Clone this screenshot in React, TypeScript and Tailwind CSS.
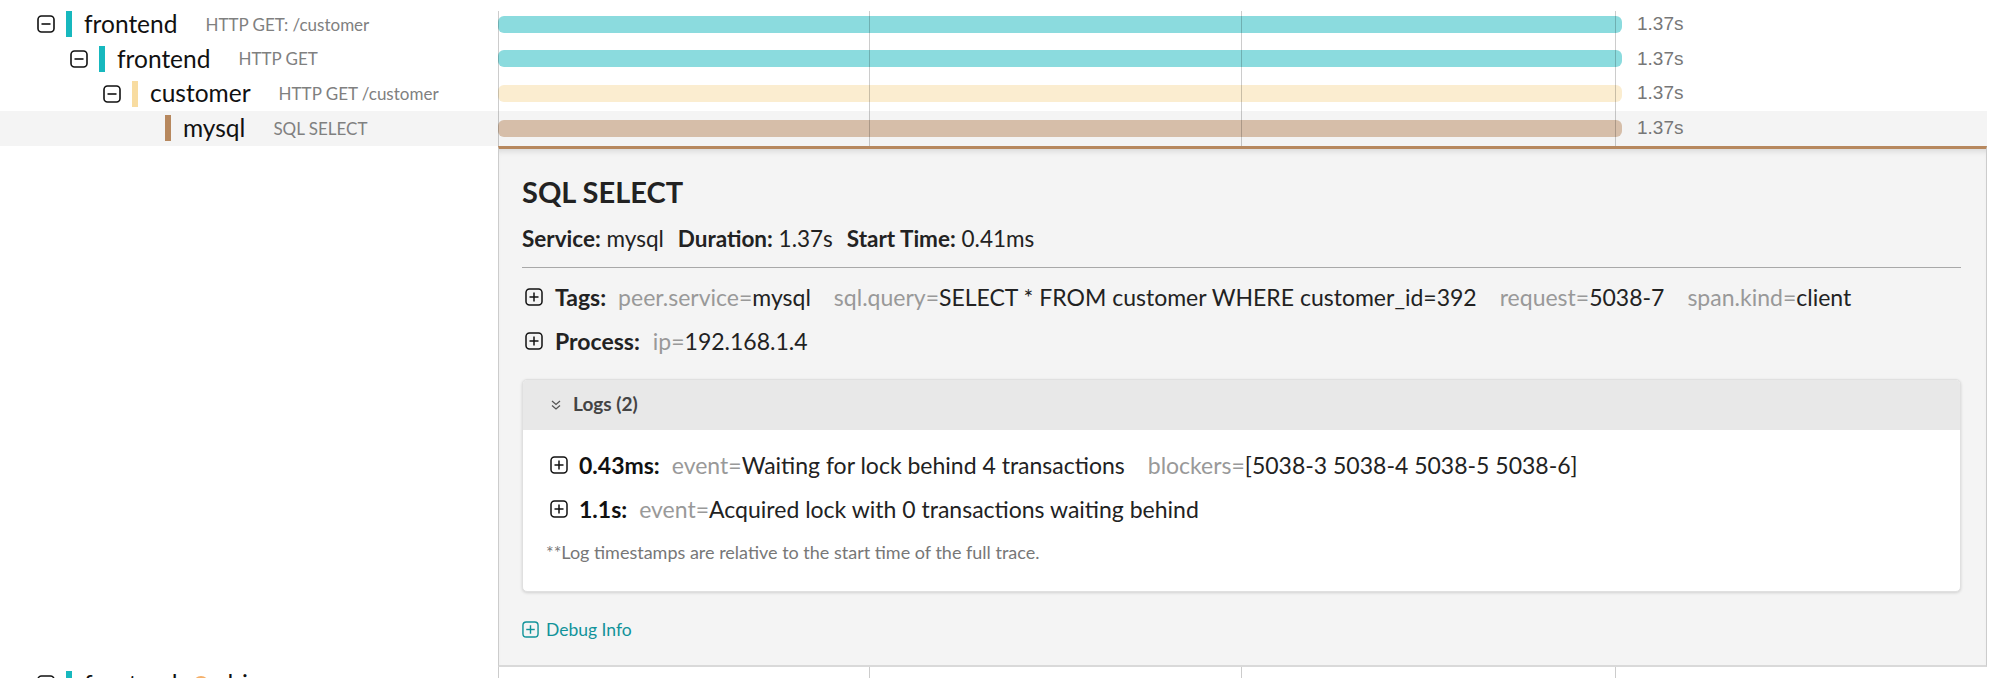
import React from 'react';

type Tone = 'teal' | 'cream' | 'brown';

const TONES: Record<Tone, { solid: string; soft: string }> = {
  teal: { solid: 'bg-[#17B8BE]', soft: 'bg-[#17B8BE]/50' },
  cream: { solid: 'bg-[#F8DCA1]', soft: 'bg-[#F8DCA1]/50' },
  brown: { solid: 'bg-[#B7885E]', soft: 'bg-[#B7885E]/50' },
};

const INDENT = ['pl-[37px]', 'pl-[70px]', 'pl-[103px]', 'pl-[136px]'];

type Span = {
  level: number;
  service: string;
  op: string;
  tone: Tone;
  collapsible: boolean;
  selected?: boolean;
};

const SPANS: Span[] = [
  { level: 0, service: 'frontend', op: 'HTTP GET: /customer', tone: 'teal', collapsible: true },
  { level: 1, service: 'frontend', op: 'HTTP GET', tone: 'teal', collapsible: true },
  { level: 2, service: 'customer', op: 'HTTP GET /customer', tone: 'cream', collapsible: true },
  { level: 3, service: 'mysql', op: 'SQL SELECT', tone: 'brown', collapsible: false, selected: true },
];

const MinusBox = () => (
  <svg width="18" height="18" viewBox="0 0 18 18" fill="none">
    <rect x="1" y="1" width="16" height="16" rx="3.5" stroke="#111" strokeWidth="1.6" />
    <line x1="4.5" y1="9" x2="13.5" y2="9" stroke="#111" strokeWidth="1.6" />
  </svg>
);

const PlusBox = ({ color = '#111', size = 18 }: { color?: string; size?: number }) => (
  <svg width={size} height={size} viewBox="0 0 18 18" fill="none">
    <rect x="1" y="1" width="16" height="16" rx="3.5" stroke={color} strokeWidth="1.5" />
    <line x1="4.5" y1="9" x2="13.5" y2="9" stroke={color} strokeWidth="1.5" />
    <line x1="9" y1="4.5" x2="9" y2="13.5" stroke={color} strokeWidth="1.5" />
  </svg>
);

const Ticks = ({ first = false }: { first?: boolean }) => (
  <>
    {['left-0', 'left-[371px]', 'left-[743px]', 'left-[1117px]'].map((pos) => (
      <div
        key={pos}
        className={`absolute ${pos} ${first ? 'top-[4px]' : 'top-0'} bottom-0 w-px bg-black/20`}
      />
    ))}
  </>
);

const SpanRow = ({ span, first }: { span: Span; first?: boolean }) => (
  <div className={`flex h-[34.67px] ${span.selected ? 'bg-[#f4f4f4]' : ''}`}>
    <div className={`w-[498px] flex items-center ${INDENT[span.level]}`}>
      <div className="w-[18px] h-[18px]">{span.collapsible && <MinusBox />}</div>
      <div className={`ml-[11px] w-[6px] h-[26px] ${TONES[span.tone].solid}`} />
      <span className="ml-[12px] text-[24.5px] text-[#111] leading-none">{span.service}</span>
      <span className="ml-[28px] text-[17px] text-[#808080] leading-none">{span.op}</span>
    </div>
    <div className="relative flex-1 flex items-center">
      <div className={`w-[1124px] h-[17px] rounded-[6px] ${TONES[span.tone].soft}`} />
      <span className="ml-[15px] text-[19px] text-[#777] font-['Liberation_Sans',sans-serif]">1.37s</span>
      <Ticks first={first} />
    </div>
  </div>
);

const Kv = ({ k, v }: { k: string; v: string }) => (
  <span className="mr-[23px]">
    <span className="text-[#999]">{k}=</span>
    <span className="text-[#222]">{v}</span>
  </span>
);

const DetailPanel = () => (
  <div className="flex">
    <div className="w-[498px]" />
    <div className="flex-1 h-[521px] bg-[#f4f4f4] border-t-[3px] border-t-[#B7885E] border-l border-r border-b-2 border-l-[#ccc] border-r-[#ccc] border-b-[#d9d9d9] shadow-[inset_0_6px_6px_-4px_rgba(0,0,0,0.12)] pl-[23px] pr-[25px] pt-[25px]">
      <h2 className="text-[29px] leading-[36px] font-bold text-[#222]">SQL SELECT</h2>
      <div className="mt-[16px] text-[22.5px] leading-[25px] text-[#222] flex gap-[14px]">
        <span><b>Service:</b> mysql</span>
        <span><b>Duration:</b> 1.37s</span>
        <span><b>Start Time:</b> 0.41ms</span>
      </div>
      <div className="mt-[16px] border-t border-[#a8a8a8]" />
      <div className="mt-[17px] flex items-center text-[23px] leading-[25px]">
        <span className="ml-[3px]"><PlusBox /></span>
        <b className="ml-[12px] mr-[12px] text-[#222]">Tags:</b>
        <Kv k="peer.service" v="mysql" />
        <Kv k="sql.query" v="SELECT * FROM customer WHERE customer_id=392" />
        <Kv k="request" v="5038-7" />
        <Kv k="span.kind" v="client" />
      </div>
      <div className="mt-[19px] flex items-center text-[23px] leading-[25px]">
        <span className="ml-[3px]"><PlusBox /></span>
        <b className="ml-[12px] mr-[13px] text-[#222]">Process:</b>
        <Kv k="ip" v="192.168.1.4" />
      </div>
      <div className="mt-[25px] bg-white rounded-[5px] border border-[#e0e0e0] shadow-[0_1px_3px_rgba(0,0,0,0.15)] overflow-hidden">
        <div className="h-[50px] bg-[#e8e8e8] flex items-center pl-[27px]">
          <svg width="12" height="12" viewBox="0 0 12 12" fill="none">
            <polyline points="2,2 6,5.5 10,2" stroke="#555" strokeWidth="1.3" />
            <polyline points="2,6.5 6,10 10,6.5" stroke="#555" strokeWidth="1.3" />
          </svg>
          <span className="ml-[11px] text-[19px] font-bold text-[#444]">Logs (2)</span>
        </div>
        <div className="pl-[23px] pt-[23px] pb-[28px] text-[23px] leading-[25px]">
          <div className="ml-[4px] flex items-center">
            <PlusBox />
            <b className="ml-[11px] mr-[12px] text-[#111]">0.43ms:</b>
            <Kv k="event" v="Waiting for lock behind 4 transactions" />
            <Kv k="blockers" v="[5038-3 5038-4 5038-5 5038-6]" />
          </div>
          <div className="mt-[19px] ml-[4px] flex items-center">
            <PlusBox />
            <b className="ml-[11px] mr-[12px] text-[#111]">1.1s:</b>
            <Kv k="event" v="Acquired lock with 0 transactions waiting behind" />
          </div>
          <div className="mt-[19px] text-[18px] leading-[22px] text-[#777]">
            **Log timestamps are relative to the start time of the full trace.
          </div>
        </div>
      </div>
      <div className="mt-[28px] flex items-center text-[17.5px] leading-[20px] text-[#11939A]">
        <PlusBox color="#11939A" size={17} />
        <span className="ml-[7px]">Debug Info</span>
      </div>
    </div>
  </div>
);

export default function App() {
  return (
    <div className="w-[2000px] h-[678px] overflow-hidden bg-white font-['Lato',sans-serif]">
      <div className="w-[1987px] pt-[7px]">
        {SPANS.map((s, i) => (
          <SpanRow key={i} span={s} first={i === 0} />
        ))}
        <DetailPanel />
        <div className="flex h-[34.67px]">
          <div className="w-[498px] flex items-center pl-[37px]">
            <div className="w-[18px] h-[18px]"><MinusBox /></div>
            <div className="ml-[11px] w-[6px] h-[26px] bg-[#17B8BE]" />
            <span className="ml-[12px] text-[24.5px] text-[#111] leading-none">frontend</span>
            <span className="ml-[16px] w-[16px] h-[16px] rounded-full bg-[#F5B06A]" />
            <span className="ml-[10px] text-[24.5px] text-[#111] leading-none">driver</span>
          </div>
          <div className="relative flex-1">
            <Ticks />
          </div>
        </div>
      </div>
    </div>
  );
}
